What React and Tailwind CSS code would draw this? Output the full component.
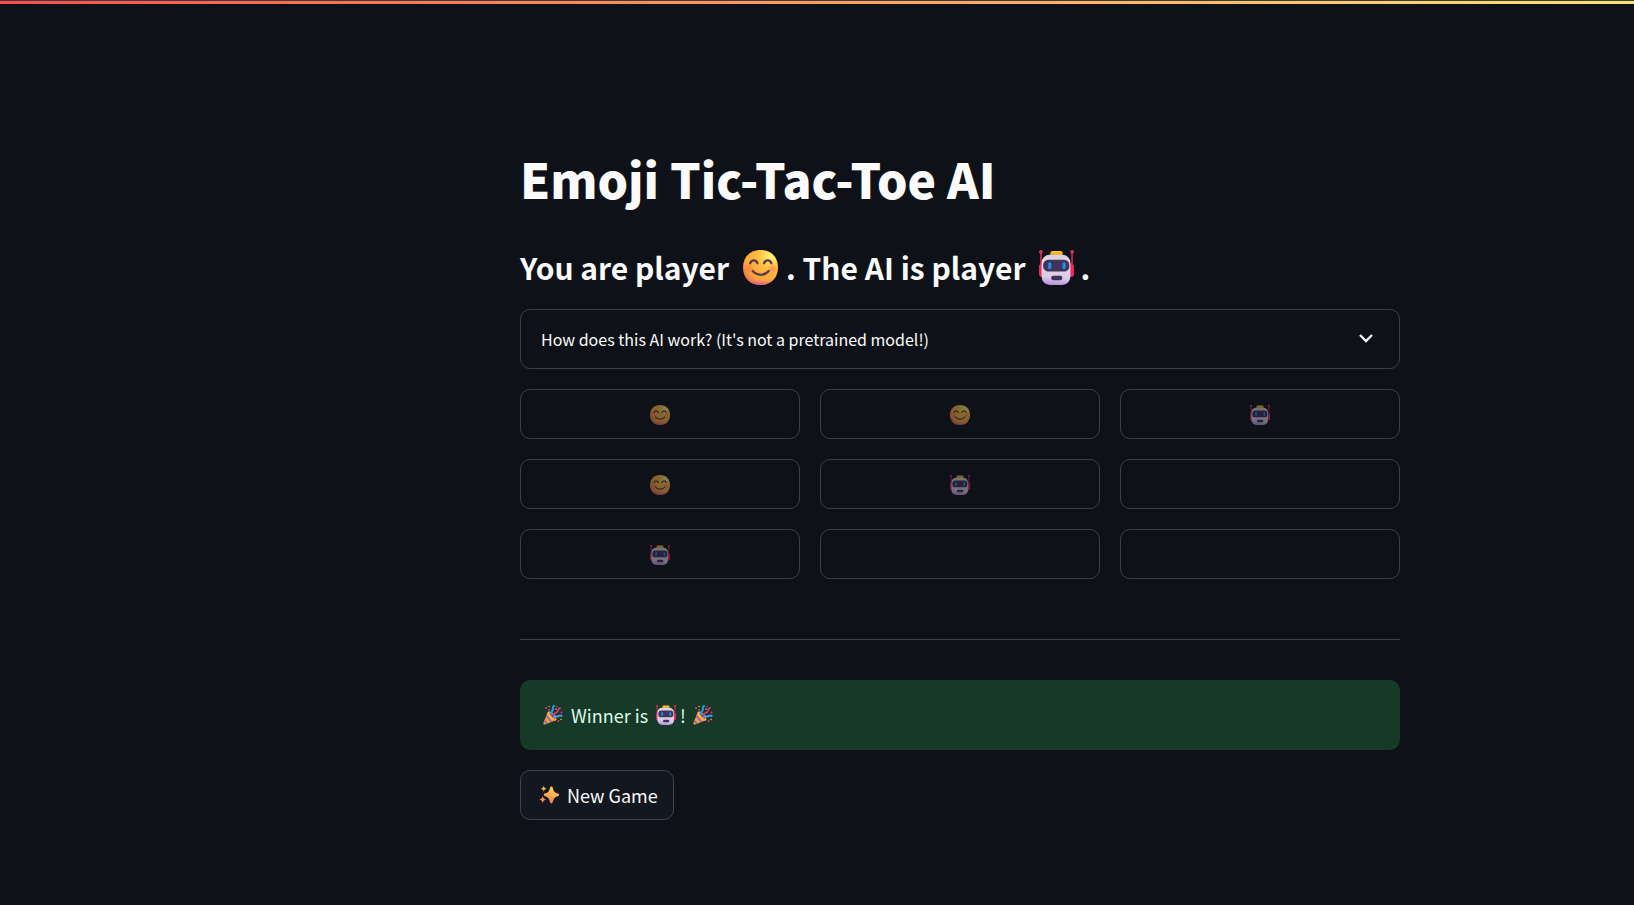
import { useId } from "react";

function Smile({ className }) {
  const id = useId();
  return (
    <svg viewBox="0 0 34 34" className={className} role="img" aria-label="smiling face">
      <defs>
        <radialGradient id={id + "a"} cx="0.8" cy="0.18" r="0.95">
          <stop offset="0" stopColor="#fff478" />
          <stop offset="0.4" stopColor="#ffbd3f" />
          <stop offset="0.8" stopColor="#fca339" />
          <stop offset="1" stopColor="#e8705a" />
        </radialGradient>
        <radialGradient id={id + "b"}>
          <stop offset="0" stopColor="#ff6a52" stopOpacity="0.6" />
          <stop offset="1" stopColor="#ff6a52" stopOpacity="0" />
        </radialGradient>
        <linearGradient id={id + "c"} x1="0" y1="0" x2="0" y2="1">
          <stop offset="0.86" stopColor="#d84fa0" stopOpacity="0" />
          <stop offset="1" stopColor="#d84fa0" stopOpacity="0.8" />
        </linearGradient>
      </defs>
      <path d="M17 0c10.200 0 17 6.800 17 17s-6.800 17-17 17S0 27.200 0 17 6.800 0 17 0Z" fill={`url(#${id}a)`} />
      <path d="M17 0c10.200 0 17 6.800 17 17s-6.800 17-17 17S0 27.200 0 17 6.800 0 17 0Z" fill={`url(#${id}c)`} />
      <circle cx="6" cy="18" r="5" fill={`url(#${id}b)`} />
      <circle cx="28.500" cy="18" r="5" fill={`url(#${id}b)`} />
      <g fill="none" stroke="#5b3a50" strokeWidth="2.300" strokeLinecap="round">
        <path d="M7 12.800c1.200-3.600 5.800-3.600 7 0M20.500 12.800c1.200-3.600 5.800-3.600 7 0M9.500 20.500c4 4.800 11.500 4.800 15.500 0" />
      </g>
    </svg>
  );
}

function Robot({ className }) {
  const id = useId();
  return (
    <svg viewBox="0 0 34 34" className={className} role="img" aria-label="robot">
      <defs>
        <linearGradient id={id + "a"} x1="0.5" y1="0" x2="0.4" y2="1">
          <stop offset="0" stopColor="#d9d0dc" />
          <stop offset="0.3" stopColor="#e2d8e8" />
          <stop offset="0.75" stopColor="#dccbe6" />
          <stop offset="1" stopColor="#b68fdb" />
        </linearGradient>
        <linearGradient id={id + "b"} x1="0" y1="0" x2="0" y2="1">
          <stop offset="0" stopColor="#ffc928" />
          <stop offset="1" stopColor="#f09a1e" />
        </linearGradient>
        <linearGradient id={id + "c"} x1="0" y1="0" x2="1" y2="0">
          <stop offset="0" stopColor="#1672e0" />
          <stop offset="1" stopColor="#25a8f0" />
        </linearGradient>
      </defs>
      <g fill="#ee2a5c">
        <circle cx="1.800" cy="1.800" r="1.800" />
        <circle cx="32.200" cy="1.800" r="1.800" />
        <path d="M1.200 2h1.400v11H4v13H2.500Q0 26 0 23V16q0-2 1.200-2ZM32.800 2h-1.400v11H30v13h1.500Q34 26 34 23V16q0-2-1.200-2Z" />
      </g>
      <path d="M11 5.500V3q0-2 2-2h8q2 0 2 2v2.500Z" fill={`url(#${id}b)`} />
      <rect x="2.500" y="4.500" width="28" height="29.500" rx="8" fill={`url(#${id}a)`} />
      <rect x="4" y="9.500" width="25.500" height="11.500" rx="5" fill="#40335c" />
      <rect x="8.600" y="12" width="3.200" height="6.600" rx="1.600" fill={`url(#${id}c)`} />
      <rect x="22.500" y="12" width="3.200" height="6.600" rx="1.600" fill={`url(#${id}c)`} />
      <rect x="12" y="25" width="10.500" height="4.300" rx="1.500" fill="#40335c" />
    </svg>
  );
}

function Party({ className }) {
  const id = useId();
  return (
    <svg viewBox="0 0 20 20" className={className} role="img" aria-label="party popper">
      <defs>
        <clipPath id={id}>
          <path d="M4.800 7 0.400 18q-.4 1.800 1.400 1.500L13.500 15Z" />
        </clipPath>
      </defs>
      <g clipPath={`url(#${id})`}>
        <path d="M0 5h14v15H0Z" fill="#f79a3b" />
        <path d="m2.500 10 7 8M0 14l5 6M5.500 8l7 8" stroke="#8b62c9" strokeWidth="1.600" />
      </g>
      <ellipse cx="9" cy="11" rx="2.500" ry="5.800" transform="rotate(-43 9 11)" fill="#ffb347" />
      <ellipse cx="9.500" cy="10.600" rx="1.200" ry="4" transform="rotate(-43 9.500 10.600)" fill="#7c3f5d" />
      <g fill="none" strokeLinecap="round">
        <path d="M8.800 9.500c-1.500-2.500.5-3 1-4.500S8.800 2.200 11 1" stroke="#1e9bf0" strokeWidth="2" />
        <path d="M11 12c1.500-2 3 .2 4.500-.8S17 9.800 18.700 11" stroke="#4b9ff0" strokeWidth="1.900" />
        <path d="M10.500 10c1-3 2.500-1.500 3.700-3S14.500 4 17 3" stroke="#f02d85" strokeWidth="1.700" />
      </g>
      <g fill="#f02d85">
        <circle cx="3" cy="3" r="1" />
        <circle cx="6" cy="5" r="1" />
        <circle cx="14" cy="1.500" r=".8" />
        <circle cx="18.500" cy="7.500" r="1" />
        <circle cx="15.500" cy="16" r="1" />
      </g>
      <g fill="#ffb547">
        <circle cx="6" cy="1.500" r=".7" />
        <circle cx="13" cy="4" r=".8" />
        <circle cx="18" cy="14.500" r=".8" />
      </g>
    </svg>
  );
}

function Sparkles({ className }) {
  const id = useId();
  return (
    <svg viewBox="0 0 20 20" className={className} role="img" aria-label="sparkles">
      <defs>
        <linearGradient id={id} x1="0.6" y1="0" x2="0.4" y2="1">
          <stop offset="0" stopColor="#ffd05a" />
          <stop offset="0.5" stopColor="#ffb04f" />
          <stop offset="1" stopColor="#f4775a" />
        </linearGradient>
      </defs>
      <g fill={`url(#${id})`}>
        <path d="M12.400 1.500c.8 0 1.100.5 1.400 1.400 1.200 4 1.700 4.400 5.300 5.700 1.300.5 1.300 2 0 2.500-3.600 1.300-4.100 1.900-5.300 6-.5 1.800-2.300 1.800-2.800 0-1.200-4.100-1.700-4.700-5.300-6-1.300-.5-1.300-2 0-2.500 3.600-1.300 4.100-1.700 5.300-5.700.3-.9.600-1.400 1.400-1.400Z" />
        <path d="M4.700.8c.6 2 1 2.400 2.800 3-1.800.6-2.200 1-2.800 3-.6-2-1-2.400-2.800-3 1.800-.6 2.200-1 2.800-3Z" />
      </g>
      <path d="M3.700 11c.7 2.300 1.200 2.800 3.400 3.500-2.200.7-2.700 1.200-3.400 3.500-.7-2.300-1.200-2.800-3.400-3.500 2.200-.7 2.700-1.200 3.400-3.500Z" fill="#f98d5c" />
    </svg>
  );
}

const CELLS = ["player", "player", "ai", "player", "ai", "", "ai", "", ""];

export default function App() {
  return (
    <div className="min-h-screen bg-[#0e1117] font-['Noto_Sans_CJK_SC','Noto_Sans',sans-serif] text-lg text-[#fafafa]">
      <div className="h-px bg-[#3b3d45]" />
      <div className="h-[3px] bg-linear-to-r from-[#ff4b4b] to-[#ffe277]" />
      <main className="pt-[136px] pb-16 md:pl-[286px]">
        <div className="mx-auto max-w-[920px] px-5">
          <h1 className="py-2 text-5xl leading-[60px] font-black">Emoji Tic-Tac-Toe AI</h1>
          <h2 className="flex flex-wrap items-center pt-[27px] pb-[18px] text-3xl leading-[48px] font-semibold">
            <span>You are player</span>
            <Smile className="mr-2 ml-[14px] size-[35px]" />
            <span>. The AI is player</span>
            <Robot className="mr-[7px] ml-[13px] size-[35px]" />
            <span>.</span>
          </h2>

          <button
            type="button"
            aria-expanded="false"
            className="flex h-[60px] w-full items-center justify-between rounded-[10px] border border-[#3e4044] pr-[23px] pb-px pl-5 text-left text-base"
          >
            <span>How does this AI work? (It's not a pretrained model!)</span>
            <svg viewBox="0 0 20 20" className="size-5" fill="none" stroke="currentColor" strokeWidth="2.300" aria-hidden="true">
              <path d="m4 6 6 6 6-6" />
            </svg>
          </button>

          <div className="mt-5 grid grid-cols-3 gap-5">
            {CELLS.map((cell, i) => (
              <button
                key={i}
                type="button"
                disabled
                aria-label={`Cell ${i + 1}`}
                className="flex h-[50px] items-center justify-center rounded-[10px] border border-[#3e4044] pt-px"
              >
                {cell === "player" && <Smile className="size-5 opacity-50" />}
                {cell === "ai" && <Robot className="size-5 opacity-50" />}
              </button>
            ))}
          </div>

          <hr className="mt-[60px] mb-10 border-[#3e4044]" />

          <div role="status" className="flex h-[70px] items-center rounded-[10px] bg-[#173928] px-[23px] text-[#dffde9]">
            <Party className="mr-2 size-5" />
            <span>Winner is</span>
            <Robot className="mr-1 ml-2 size-5" />
            <span>!</span>
            <Party className="ml-[7px] size-5" />
          </div>

          <button
            type="button"
            className="mt-5 flex h-[50px] items-center gap-2 rounded-[10px] border border-[#41444c] bg-[#131720] pr-[15px] pl-[18px]"
          >
            <Sparkles className="size-5" />
            <span>New Game</span>
          </button>
        </div>
      </main>
    </div>
  );
}
